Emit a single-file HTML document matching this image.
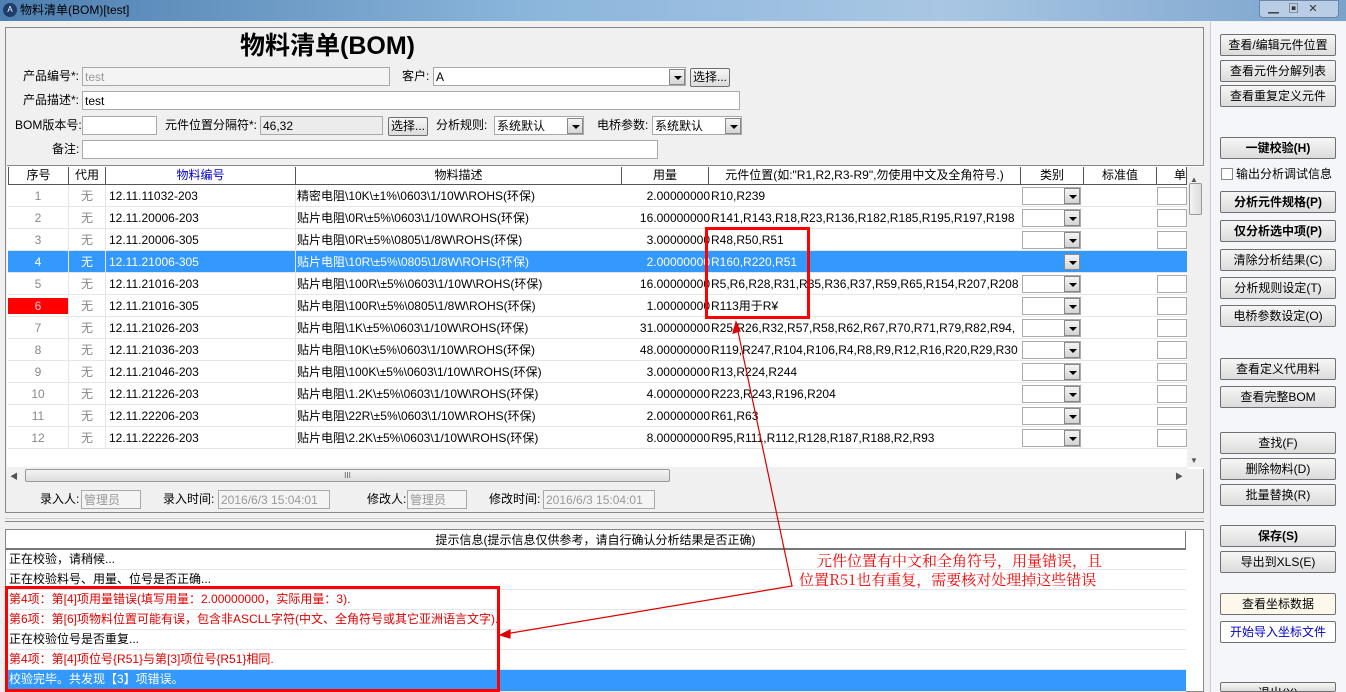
<!DOCTYPE html>
<html style="overflow:hidden;width:1346px;height:692px"><head><meta charset="utf-8">
<style>
*{box-sizing:border-box;margin:0;padding:0}
html,body{overflow:hidden}
body{width:1346px;height:692px;overflow:hidden;background:#f0f0f0;font-family:"Liberation Sans","Noto Sans CJK SC",sans-serif;font-size:12px;color:#000;position:relative;line-height:14px}
.a{position:absolute;white-space:nowrap}
.in{position:absolute;background:#fff;border:1px solid #a9a9a9;height:19px;padding:1px 2px;font-size:12px;line-height:16px}
.dis{color:#999;background:#f4f4f4}
.btn{position:absolute;left:1220px;width:116px;height:22px;border:1px solid #707070;border-radius:2px;background:linear-gradient(#f6f6f6,#dcdcdc);text-align:center;line-height:20px;font-size:12px}
.b{font-weight:bold}
.dd{position:absolute;width:16px;height:16px;border:1px solid #888;background:linear-gradient(#f4f4f4,#d4d4d4)}
.dd:after{content:"";position:absolute;left:4px;top:6px;border:4px solid transparent;border-top:4px solid #000;border-bottom:0}
.row{position:absolute;left:8px;width:1179px;height:22px;border-bottom:1px solid #e6e6e6;background:#fff}
.row span{position:absolute;top:4px;white-space:nowrap;font-size:12px;line-height:14px}
.c1{left:0;width:60px;text-align:center;color:#888}
.c2{left:61px;width:36px;text-align:center;color:#888}
.c3{left:101px}
.c4{left:289px}
.c5{left:614px;width:88px;text-align:right}
.c6{left:703px;width:310px;overflow:hidden}
.cb{position:absolute;left:1014px;top:2px;width:59px;height:18px;border:1px solid #aaa;background:#fff}
.cu{position:absolute;left:1149px;top:2px;width:30px;height:18px;border:1px solid #aaa;background:#fff}
.sel{background:#3399ff;color:#fff}
.sel span{color:#fff!important}
.hd{position:absolute;top:167px;height:18px;border-right:1px solid #555;text-align:center;line-height:17px;background:#fff;font-size:12px}
.il{position:absolute;left:6px;width:1180px;height:20px;border-bottom:1px solid #e6e6e6;background:#fff;padding-left:3px;line-height:19px;font-size:12px}
.red{color:#e00000}
</style></head><body>
<div class="a" style="left:0;top:0;width:1346px;height:21px;background:linear-gradient(90deg,#4d7fb0,#8cb6dc 40%,#a9c7e4 70%,#7aa3cc)"></div>
<div class="a" style="left:3px;top:3px;width:14px;height:14px;border-radius:7px;background:#1f3d6a;color:#fff;font-size:8px;line-height:14px;text-align:center">A</div>
<div class="a" style="left:20px;top:3px;font-size:12px;color:#000">物料清单(BOM)[test]</div>
<div class="a" style="left:1259px;top:0;width:80px;height:18px;background:#b9cde4;border:1px solid #6a86a8;border-radius:0 0 4px 4px"></div>
<div class="a" style="left:1268px;top:2px;font-size:11px;color:#333">▁ &nbsp; ▣ &nbsp; ✕</div>

<div class="a" style="left:5px;top:27px;width:1199px;height:486px;border:1px solid #888;background:#f0f0f0"></div>
<div class="a" style="left:240px;top:30px;font-size:25px;line-height:32px;font-weight:bold">物料清单(BOM)</div>

<div class="a" style="left:23px;top:69px">产品编号*:</div>
<div class="in dis" style="left:82px;top:67px;width:308px">test</div>
<div class="a" style="left:402px;top:69px">客户:</div>
<div class="in" style="left:433px;top:67px;width:253px">A</div>
<div class="dd" style="left:669px;top:69px"></div>
<div class="btn" style="left:690px;top:68px;width:40px;height:19px;line-height:17px">选择...</div>
<div class="a" style="left:23px;top:93px">产品描述*:</div>
<div class="in" style="left:82px;top:91px;width:658px">test</div>
<div class="a" style="left:15px;top:118px">BOM版本号:</div>
<div class="in" style="left:82px;top:116px;width:75px"></div>
<div class="a" style="left:165px;top:118px">元件位置分隔符*:</div>
<div class="in dis" style="left:260px;top:116px;width:123px;color:#000;background:#ececec">46,32</div>
<div class="btn" style="left:388px;top:117px;width:40px;height:19px;line-height:17px">选择...</div>
<div class="a" style="left:436px;top:118px">分析规则:</div>
<div class="in" style="left:494px;top:116px;width:90px">系统默认</div>
<div class="dd" style="left:567px;top:118px"></div>
<div class="a" style="left:597px;top:118px">电桥参数:</div>
<div class="in" style="left:652px;top:116px;width:90px">系统默认</div>
<div class="dd" style="left:725px;top:118px"></div>
<div class="a" style="left:52px;top:142px">备注:</div>
<div class="in" style="left:82px;top:140px;width:576px"></div>

<div class="a" style="left:7px;top:165px;width:1197px;height:304px;background:#fff;border-top:1px solid #888"></div>
<div class="hd" style="left:8px;width:61px;border-left:1px solid #555">序号</div>
<div class="hd" style="left:69px;width:37px">代用</div>
<div class="hd" style="left:106px;width:190px;color:#0000d0">物料编号</div>
<div class="hd" style="left:296px;width:326px">物料描述</div>
<div class="hd" style="left:622px;width:87px">用量</div>
<div class="hd" style="left:709px;width:312px">元件位置(如:"R1,R2,R3-R9",勿使用中文及全角符号.)</div>
<div class="hd" style="left:1021px;width:63px">类别</div>
<div class="hd" style="left:1084px;width:73px">标准值</div>
<div class="hd" style="left:1157px;width:30px;text-align:right;overflow:hidden">单</div>
<div class="a" style="left:8px;top:184px;width:1179px;height:1px;background:#555"></div>

<div class="row" style="top:185px"><span class="c1">1</span><span class="c2">无</span><span class="c3">12.11.11032-203</span><span class="c4">精密电阻\10K\±1%\0603\1/10W\ROHS(环保)</span><span class="c5">2.00000000</span><span class="c6">R10,R239</span><div class="cb"></div><div class="dd" style="left:1056px;top:3px"></div><div class="cu"></div></div>
<div class="row" style="top:207px"><span class="c1">2</span><span class="c2">无</span><span class="c3">12.11.20006-203</span><span class="c4">贴片电阻\0R\±5%\0603\1/10W\ROHS(环保)</span><span class="c5">16.00000000</span><span class="c6">R141,R143,R18,R23,R136,R182,R185,R195,R197,R198</span><div class="cb"></div><div class="dd" style="left:1056px;top:3px"></div><div class="cu"></div></div>
<div class="row" style="top:229px"><span class="c1">3</span><span class="c2">无</span><span class="c3">12.11.20006-305</span><span class="c4">贴片电阻\0R\±5%\0805\1/8W\ROHS(环保)</span><span class="c5">3.00000000</span><span class="c6">R48,R50,R51</span><div class="cb"></div><div class="dd" style="left:1056px;top:3px"></div><div class="cu"></div></div>
<div class="row sel" style="top:251px"><span class="c1">4</span><span class="c2">无</span><span class="c3">12.11.21006-305</span><span class="c4">贴片电阻\10R\±5%\0805\1/8W\ROHS(环保)</span><span class="c5">2.00000000</span><span class="c6">R160,R220,R51</span><div class="cb" style="background:#3399ff;border-color:#3399ff"></div><div class="dd" style="left:1056px;top:3px"></div><div class="cu" style="background:#3399ff;border-color:#3399ff"></div></div>
<div class="row" style="top:273px"><span class="c1">5</span><span class="c2">无</span><span class="c3">12.11.21016-203</span><span class="c4">贴片电阻\100R\±5%\0603\1/10W\ROHS(环保)</span><span class="c5">16.00000000</span><span class="c6">R5,R6,R28,R31,R35,R36,R37,R59,R65,R154,R207,R208</span><div class="cb"></div><div class="dd" style="left:1056px;top:3px"></div><div class="cu"></div></div>
<div class="row" style="top:295px"><div style="position:absolute;left:0;top:3px;width:61px;height:16px;background:#f00"></div><span class="c1" style="color:#fcc">6</span><span class="c2">无</span><span class="c3">12.11.21016-305</span><span class="c4">贴片电阻\100R\±5%\0805\1/8W\ROHS(环保)</span><span class="c5">1.00000000</span><span class="c6">R113用于R¥</span><div class="cb"></div><div class="dd" style="left:1056px;top:3px"></div><div class="cu"></div></div>
<div class="row" style="top:317px"><span class="c1">7</span><span class="c2">无</span><span class="c3">12.11.21026-203</span><span class="c4">贴片电阻\1K\±5%\0603\1/10W\ROHS(环保)</span><span class="c5">31.00000000</span><span class="c6">R25,R26,R32,R57,R58,R62,R67,R70,R71,R79,R82,R94,</span><div class="cb"></div><div class="dd" style="left:1056px;top:3px"></div><div class="cu"></div></div>
<div class="row" style="top:339px"><span class="c1">8</span><span class="c2">无</span><span class="c3">12.11.21036-203</span><span class="c4">贴片电阻\10K\±5%\0603\1/10W\ROHS(环保)</span><span class="c5">48.00000000</span><span class="c6">R119,R247,R104,R106,R4,R8,R9,R12,R16,R20,R29,R30</span><div class="cb"></div><div class="dd" style="left:1056px;top:3px"></div><div class="cu"></div></div>
<div class="row" style="top:361px"><span class="c1">9</span><span class="c2">无</span><span class="c3">12.11.21046-203</span><span class="c4">贴片电阻\100K\±5%\0603\1/10W\ROHS(环保)</span><span class="c5">3.00000000</span><span class="c6">R13,R224,R244</span><div class="cb"></div><div class="dd" style="left:1056px;top:3px"></div><div class="cu"></div></div>
<div class="row" style="top:383px"><span class="c1">10</span><span class="c2">无</span><span class="c3">12.11.21226-203</span><span class="c4">贴片电阻\1.2K\±5%\0603\1/10W\ROHS(环保)</span><span class="c5">4.00000000</span><span class="c6">R223,R243,R196,R204</span><div class="cb"></div><div class="dd" style="left:1056px;top:3px"></div><div class="cu"></div></div>
<div class="row" style="top:405px"><span class="c1">11</span><span class="c2">无</span><span class="c3">12.11.22206-203</span><span class="c4">贴片电阻\22R\±5%\0603\1/10W\ROHS(环保)</span><span class="c5">2.00000000</span><span class="c6">R61,R63</span><div class="cb"></div><div class="dd" style="left:1056px;top:3px"></div><div class="cu"></div></div>
<div class="row" style="top:427px"><span class="c1">12</span><span class="c2">无</span><span class="c3">12.11.22226-203</span><span class="c4">贴片电阻\2.2K\±5%\0603\1/10W\ROHS(环保)</span><span class="c5">8.00000000</span><span class="c6">R95,R111,R112,R128,R187,R188,R2,R93</span><div class="cb"></div><div class="dd" style="left:1056px;top:3px"></div><div class="cu"></div></div>
<div class="a" style="left:68px;top:185px;width:1px;height:264px;background:#e6e6e6"></div>
<div class="a" style="left:105px;top:185px;width:1px;height:264px;background:#e6e6e6"></div>
<div class="a" style="left:295px;top:185px;width:1px;height:264px;background:#e6e6e6"></div>
<div class="a" style="left:1187px;top:167px;width:17px;height:300px;background:#f0f0f0"></div>
<div class="a" style="left:1190px;top:173px;font-size:8px;color:#555">▲</div>
<div class="a" style="left:1189px;top:183px;width:13px;height:32px;border:1px solid #999;border-radius:2px;background:linear-gradient(90deg,#f4f4f4,#ddd)"></div>
<div class="a" style="left:1190px;top:454px;font-size:8px;color:#555">▼</div>
<div class="a" style="left:7px;top:467px;width:1180px;height:17px;background:#f0f0f0"></div>
<div class="a" style="left:10px;top:470px;font-size:8px;color:#555">◀</div>
<div class="a" style="left:25px;top:469px;width:645px;height:13px;border:1px solid #999;border-radius:2px;background:linear-gradient(#f4f4f4,#ddd);text-align:center;font-size:8px;line-height:11px;color:#555">III</div>
<div class="a" style="left:1175px;top:470px;font-size:8px;color:#555">▶</div>
<div class="a" style="left:40px;top:492px">录入人:</div>
<div class="in dis" style="left:81px;top:490px;width:60px">管理员</div>
<div class="a" style="left:163px;top:492px">录入时间:</div>
<div class="in dis" style="left:218px;top:490px;width:112px">2016/6/3 15:04:01</div>
<div class="a" style="left:367px;top:492px">修改人:</div>
<div class="in dis" style="left:407px;top:490px;width:60px">管理员</div>
<div class="a" style="left:489px;top:492px">修改时间:</div>
<div class="in dis" style="left:543px;top:490px;width:112px">2016/6/3 15:04:01</div>
<div class="a" style="left:5px;top:518px;width:1199px;height:4px;border-top:1px solid #ccc;border-bottom:1px solid #888"></div>

<div class="a" style="left:5px;top:529px;width:1199px;height:163px;border:1px solid #888;background:#fff"></div>
<div class="a" style="left:6px;top:531px;width:1180px;height:19px;border-bottom:2px solid #777;border-right:1px solid #777;text-align:center;line-height:18px">提示信息(提示信息仅供参考，请自行确认分析结果是否正确)</div>
<div class="il" style="top:550px">正在校验，请稍候...</div>
<div class="il" style="top:570px">正在校验料号、用量、位号是否正确...</div>
<div class="il red" style="top:590px">第4项：第[4]项用量错误(填写用量：2.00000000，实际用量：3).</div>
<div class="il red" style="top:610px">第6项：第[6]项物料位置可能有误，包含非ASCLL字符(中文、全角符号或其它亚洲语言文字).</div>
<div class="il" style="top:630px">正在校验位号是否重复...</div>
<div class="il red" style="top:650px">第4项：第[4]项位号{R51}与第[3]项位号{R51}相同.</div>
<div class="il" style="top:670px;background:#3399ff;color:#fff;height:22px">校验完毕。共发现【3】项错误。</div>

<div class="a" style="left:5px;top:586px;width:495px;height:106px;border:3px solid #f00"></div>
<div class="a" style="left:705px;top:227px;width:105px;height:92px;border:3px solid #f00"></div>
<svg class="a" style="left:0;top:0" width="1346" height="692"><g stroke="#d00" stroke-width="1.2" fill="#d00"><polyline fill="none" points="736,322 792,586 505,634"/><polygon points="736,322 733,333 740,331"/><polygon points="500,635 510,630 510,638"/></g></svg>
<div class="a red" style="left:817px;top:552px;font-family:'Noto Serif CJK SC','Liberation Serif',serif;font-size:15px;line-height:18px;color:#f00">元件位置有中文和全角符号，用量错误，且</div>
<div class="a red" style="left:799px;top:571px;font-family:'Noto Serif CJK SC','Liberation Serif',serif;font-size:15px;line-height:18px;color:#f00">位置R51也有重复，需要核对处理掉这些错误</div>

<div class="a" style="left:1210px;top:22px;width:136px;height:670px;background:#f4f6f9;border-left:1px solid #ccc;overflow:hidden"></div>
<div class="btn" style="top:34px">查看/编辑元件位置</div>
<div class="btn" style="top:60px">查看元件分解列表</div>
<div class="btn" style="top:85px">查看重复定义元件</div>
<div class="btn b" style="top:137px">一键校验(H)</div>
<div class="a" style="left:1221px;top:168px;width:12px;height:12px;border:1px solid #888;background:#fff"></div>
<div class="a" style="left:1236px;top:167px">输出分析调试信息</div>
<div class="btn b" style="top:191px">分析元件规格(P)</div>
<div class="btn b" style="top:220px">仅分析选中项(P)</div>
<div class="btn" style="top:249px">清除分析结果(C)</div>
<div class="btn" style="top:277px">分析规则设定(T)</div>
<div class="btn" style="top:305px">电桥参数设定(O)</div>
<div class="btn" style="top:358px">查看定义代用料</div>
<div class="btn" style="top:386px">查看完整BOM</div>
<div class="btn" style="top:432px">查找(F)</div>
<div class="btn" style="top:458px">删除物料(D)</div>
<div class="btn" style="top:484px">批量替换(R)</div>
<div class="btn b" style="top:525px">保存(S)</div>
<div class="btn" style="top:551px">导出到XLS(E)</div>
<div class="btn" style="top:593px;background:#fdf8ea">查看坐标数据</div>
<div class="btn" style="top:621px;background:#fff;color:#0000d0">开始导入坐标文件</div>
<div class="btn" style="top:682px;height:10px;overflow:hidden;line-height:20px">退出(X)</div>
</body></html>
